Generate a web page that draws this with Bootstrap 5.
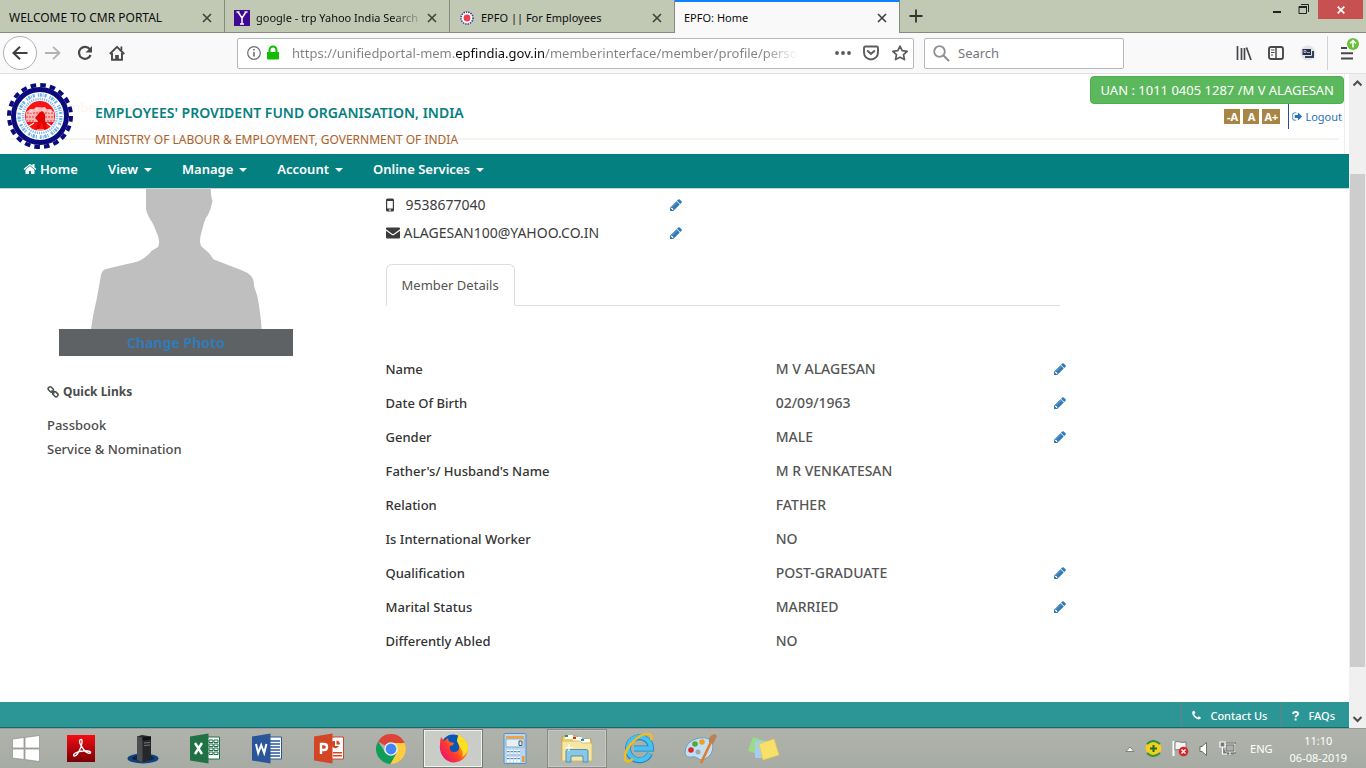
<!DOCTYPE html>
<html lang="en">
<head>
<meta charset="utf-8">
<meta name="viewport" content="width=device-width, initial-scale=1">
<title>EPFO: Home</title>
<link href="https://cdn.jsdelivr.net/npm/bootstrap@5.3.0/dist/css/bootstrap.min.css" rel="stylesheet">
<style>
  body { font-family: "Noto Sans", "Open Sans", sans-serif; font-size: 13px; line-height: 20px; color: #3c3c3c; background: #fff; }
  button { font: inherit; color: inherit; }
  .plain-btn { border: 0; background: none; padding: 0; display: inline-flex; align-items: center; justify-content: center; }
  svg { display: block; flex: none; }

  /* browser tab strip */
  .tabstrip { height: 33px; background: #c1c9b5; border-bottom: 1px solid #858b7c; color: #0c0c0d; }
  .tab-item { width: 225px; height: 33px; flex: 0 1 225px; padding: 2px 10px 0 9px; border-right: 1px solid #858b7c; font-size: 11px; }
  .tab-item .tab-title { flex: 1 1 0; min-width: 0; overflow: hidden; white-space: nowrap; }
  .tab-item.caps { font-size: 12px; }
  .tab-icon { margin-right: 6px; }
  .tab-item.fade-end .tab-title { -webkit-mask-image: linear-gradient(90deg, #000 80%, transparent); mask-image: linear-gradient(90deg, #000 80%, transparent); }
  .tab-item.current { background: #f9f9fa; border-top: 2px solid #0a84ff; padding-top: 0; }
  .close-win { width: 45px; height: 19px; background: #c75050; margin-right: 3px; }

  /* browser toolbar */
  .toolbar { height: 41px; background: #f9f9fa; border-bottom: 1px solid #e1e1e2; color: #48484a; padding-left: 3px; }
  .back-btn { width: 34px; height: 34px; border: 1px solid #b1b1b1; border-radius: 50%; background: #fff; }
  .fieldbox { height: 31px; background: #fff; border: 1px solid #b8b8b8; border-radius: 2px; }
  .fieldbox input { border: 0; outline: 0; padding: 0; background: transparent; min-width: 0; height: 27px; color: #76767a; font-size: 13px; }
  .fieldbox input.url-input {
    color: #76767a; -webkit-text-fill-color: transparent;
    background: linear-gradient(90deg, #808080 167px, #0c0c0d 167px, #0c0c0d 256px, #808080 256px, #808080 475px, #fff 510px);
    -webkit-background-clip: text; background-clip: text;
  }
  .url-box { margin-left: 112px; }
  .search-box { width: 200px; margin-left: 10px; }
  .gap-before { margin-left: 12px; }
  .gap-wide { margin-left: 112px; }
  .tool-sep { width: 1px; height: 34px; background: #d2d2d3; margin-left: 11px; }

  /* site header */
  .site-head { height: 80px; border-right: 1px solid #eee; margin-right: 4px; padding-left: 7px; }
  .site-head::before { content: ""; position: absolute; left: 10px; right: 5px; top: 64px; height: 2px; background: #f6f2ec; }
  .ghost-title { position: absolute; left: 49px; top: 23px; color: #faf6ef; }
  .seal { margin-top: 9px; }
  .org-text { padding: 29px 0 0 22px; }
  .org-name { color: #058080; font-size: 14px; font-weight: 600; line-height: 20px; margin: 0; }
  .org-ministry { color: #a9622c; font-size: 12px; line-height: 20px; margin: 7px 0 0; }
  .user-box { padding-top: 2px; }
  .uan-badge { background: #5cb85c; border: 1px solid #4cae4c; border-radius: 4px; color: #fff; padding: 3px 9px; font-size: 13px; }
  .size-btn { height: 15px; min-width: 16px; padding: 0 2px; margin-left: 3px; border: 0; background: #a98545; color: #fff; font-size: 11px; line-height: 15px; font-weight: 700; }
  .logout { font-size: 11px; color: #2a72b8; border-left: 1px solid #2a4aa5; height: 25px; padding-left: 3px; margin: 0 2px 0 8px; gap: 2px; }

  /* main menu */
  .menu-bar { background: #058080; height: 35px; border-bottom: 1px solid #c8d6d6; padding: 0 8px; }
  .menu-bar .nav-link { color: #fff; font-size: 13px; font-weight: 600; line-height: 20px; padding: 5px 15px; }
  .menu-bar .home-link { gap: 3px; }
  .menu-bar .dropdown-toggle::after { margin-left: 6px; vertical-align: 2px; border-top-width: 4px; border-right-width: 4px; border-left-width: 4px; }

  /* profile */
  .profile-grid { display: grid; grid-template-columns: 26fr 74fr; padding-left: 47px; }
  .photo { width: 234px; margin-left: 12px; }
  .photo-link { display: block; background: #5e6264; color: #337ab7; font-size: 14px; font-weight: 700; line-height: 27px; text-align: center; text-decoration: none; }
  .side-title { font-size: 12px; font-weight: 700; color: #4b4b4b; line-height: 20px; margin: 26px 0 11px; }
  .side-link { color: #4b4b4b; font-weight: 500; line-height: 24px; text-decoration: none; }
  .contact-list { padding-top: 2px; }
  .contact-line { display: grid; grid-template-columns: 284fr 680fr; height: 28px; align-items: center; font-size: 14px; }
  .edit-link { color: #337ab7; display: block; width: 14px; }
  .tab-head { width: 70%; margin-top: 17px; border-color: #ddd; }
  .tab-head .nav-link.active { color: #555; border-color: #ddd #ddd #fff; padding: 10px 15px; line-height: 20px; font-weight: 400; }
  .details { width: 100%; margin-top: 46px; table-layout: fixed; }
  .details th, .details td { height: 34px; padding: 0; vertical-align: middle; }
  .details th { font-weight: 500; color: #333; width: 40.5%; }
  .details td { font-weight: 500; font-size: 14px; color: #555; }
  .details td:nth-child(2) { width: 28.8%; }

  .site-foot { height: 26px; background: #2c9595; border-bottom: 1px solid #136a6a; }
  .site-foot a { color: #fff; font-size: 11px; font-weight: 500; text-decoration: none; border-left: 1px solid #6d7f80; padding: 2px 14px 0 9px; gap: 8px; }

  .content-row { min-height: 0; }
  .scroll-track { width: 17px; background: #f0f0f0; }
  .scroll-before { flex: 81 0 0; }
  .scroll-thumb { flex: 493 0 0; background: #cdcdcd; margin: 0 1px; }
  .scroll-after { flex: 42 0 0; }

  /* desktop taskbar */
  .taskbar { height: 40px; background: linear-gradient(#b0b3ab, #a6aba4); border-top: 1px solid #979a94; color: #fff; font-size: 11px; }
  .task { width: 60px; height: 39px; margin-right: 2px; border: 1px solid transparent; }
  .task.start { width: 51px; margin-right: 0; }
  .task.open { border-color: #888b85; background: #b5b9b2; box-shadow: inset 0 0 0 1px #c5c8c2; }
  .task.active { border-color: #777a75; background: #c9ccc7; box-shadow: inset 0 0 0 1px #f2f3f1; }
  .tray { gap: 10px; }
  .clock { line-height: 17px; text-align: center; margin: 0 19px 0 7px; }
</style>
</head>
<body class="d-flex flex-column vh-100 overflow-hidden">

<svg width="0" height="0" class="position-absolute" aria-hidden="true">
  <symbol id="i-pencil" viewBox="0 0 1792 1792"><path fill="currentColor" d="M491 1536l91-91-235-235-91 91v107h128v128h107zm523-928q0-22-22-22-10 0-17 7l-542 542q-7 7-7 17 0 22 22 22 10 0 17-7l542-542q7-7 7-17zm-54-192l416 416-832 832h-416v-416zm683 96q0 53-37 90l-166 166-416-416 166-165q36-38 90-38 53 0 91 38l235 234q37 39 37 91z"/><path fill="currentColor" fill-opacity=".6" d="M960 560l90 90-600 600-90-90z"/></symbol>
  <symbol id="i-close" viewBox="0 0 10 10"><path d="M1 1l8 8M9 1l-8 8" stroke="#3e413b" stroke-width="1.6" fill="none"/></symbol>
  <symbol id="i-seal" viewBox="0 0 66 66">
    <circle cx="33" cy="33" r="31" fill="none" stroke="#0b0b7c" stroke-width="4" stroke-dasharray="5.600 4.139"/>
    <circle cx="33" cy="33" r="26.500" fill="#fff" stroke="#0b0b7c" stroke-width="5"/>
    <circle cx="33" cy="33" r="21" fill="none" stroke="#6fb1f0" stroke-width="3.400" stroke-dasharray="1.200 .9 2.200 .8 .8 1.100 2 3"/>
    <circle cx="33" cy="33" r="17" fill="none" stroke="#7dbcf3" stroke-width="2.400" stroke-dasharray="1.200 1"/>
    <circle cx="33" cy="33" r="15" fill="#f81414"/>
    <path d="M19 29q3-3 7-3l7-2 7 2q4 0 7 3v10h-28z" fill="#f9b4b4"/>
    <path d="M20 30h26M19 34h9M38 34h9M19 38h8M40 38h8" stroke="#e33" stroke-width="1.200" stroke-dasharray="2 1"/>
    <circle cx="24" cy="28" r="2" fill="#fcc"/><circle cx="30" cy="26" r="2" fill="#fcc"/><circle cx="37" cy="26" r="2" fill="#fcc"/><circle cx="43" cy="28" r="2" fill="#fcc"/>
    <path d="M32 30l3-2 3 3v6l2 9h-3l-2-6-3 6h-3l2-8-3-3z" fill="#e60000"/>
    <path d="M22 43l5-3M44 43l-4-3M30 47h7" stroke="#fff" stroke-width="1.200"/>
  </symbol>
</svg>

<!-- Tab strip -->
<div class="tabstrip d-flex flex-shrink-0">
  <div class="tab-item caps d-flex align-items-center"><span class="tab-title">WELCOME TO CMR PORTAL</span><button class="plain-btn" aria-label="Close tab"><svg width="14" height="14" viewBox="-2 -2 14 14"><use href="#i-close" width="10" height="10"/></svg></button></div>
  <div class="tab-item fade-end d-flex align-items-center">
    <svg class="tab-icon" width="16" height="16" viewBox="0 0 16 16"><path fill="#3e0a91" d="M0 0h16v16H0z"/><path d="M4 2l4 6 4-6M8 8v6M2.500 2h3M10.500 2h3M6 14h4" stroke="#fff" stroke-width="1.500" fill="none"/></svg>
    <span class="tab-title">google - trp Yahoo India Search</span><button class="plain-btn" aria-label="Close tab"><svg width="14" height="14" viewBox="-2 -2 14 14"><use href="#i-close" width="10" height="10"/></svg></button></div>
  <div class="tab-item d-flex align-items-center">
    <svg class="tab-icon" width="16" height="16" viewBox="0 0 16 16"><circle cx="8" cy="8" r="6" fill="#fff" stroke="#3d3d94" stroke-width="1.600" stroke-dasharray="1.400 1"/><circle cx="8" cy="8" r="3.400" fill="#ee3f48"/></svg>
    <span class="tab-title">EPFO || For Employees</span><button class="plain-btn" aria-label="Close tab"><svg width="14" height="14" viewBox="-2 -2 14 14"><use href="#i-close" width="10" height="10"/></svg></button></div>
  <div class="tab-item current d-flex align-items-center"><span class="tab-title">EPFO: Home</span><button class="plain-btn" aria-label="Close tab"><svg width="14" height="14" viewBox="-2 -2 14 14"><use href="#i-close" width="10" height="10"/></svg></button></div>
  <button class="plain-btn ms-2" aria-label="New tab"><svg width="16" height="16" viewBox="0 0 16 16"><path d="M8 1.500v13M1.500 8h13" stroke="#32352f" stroke-width="1.800"/></svg></button>
  <div class="ms-auto d-flex align-items-start">
    <button class="plain-btn me-3" aria-label="Minimize"><svg width="10" height="19" viewBox="0 0 10 19"><path d="M1 12h8" stroke="#222" stroke-width="2"/></svg></button>
    <button class="plain-btn me-2" aria-label="Restore"><svg width="12" height="19" viewBox="0 0 12 19"><path d="M1 6.500h7.500v7H1zM3 4.500h7.500V12" stroke="#222" fill="none"/><path d="M1 7h8" stroke="#222" stroke-width="2"/></svg></button>
    <button class="plain-btn close-win" aria-label="Close"><svg width="8" height="8" viewBox="0 0 8 8"><path d="M.7.7l6.600 6.600M7.300.7L.7 7.300" stroke="#fff" stroke-width="1.700"/></svg></button>
  </div>
</div>

<!-- Toolbar -->
<div class="toolbar d-flex align-items-center flex-shrink-0">
  <button class="plain-btn back-btn" aria-label="Back"><svg width="16" height="16" viewBox="0 0 16 16"><path d="M15.500 8H1.500M8 1.800L1.500 8 8 14.200" fill="none" stroke="#3f3f41" stroke-width="2"/></svg></button>
  <button class="plain-btn ms-2" aria-label="Forward"><svg width="16" height="16" viewBox="0 0 16 16"><path d="M0 8h14.500M8 1.800L14.500 8 8 14.200" fill="none" stroke="#b3b3b4" stroke-width="1.800"/></svg></button>
  <button class="plain-btn ms-3" aria-label="Reload"><svg width="16" height="16" viewBox="0 0 16 16"><path d="M12.800 4.200A6 6 0 1 0 13.600 10" fill="none" stroke="#48484a" stroke-width="2.200"/><path d="M15 1v6.500H8.500z" fill="#48484a"/></svg></button>
  <button class="plain-btn ms-3" aria-label="Home page"><svg width="16" height="16" viewBox="0 0 16 16"><path d="M.8 9L8 1.800 15.200 9" fill="none" stroke="#48484a" stroke-width="1.900" stroke-linejoin="round"/><path d="M3 8v6.800h10V8" fill="none" stroke="#48484a" stroke-width="1.900"/><path d="M6.200 15v-5h3.600v5zM11.500 1.500h1.800v4h-1.800z" fill="#48484a"/></svg></button>
  <div class="fieldbox url-box d-flex align-items-center flex-grow-1">
    <svg class="ms-2" width="16" height="16" viewBox="0 0 16 16"><circle cx="8" cy="8" r="6.300" fill="none" stroke="#6d6d70" stroke-width="1.200"/><path d="M8 7v4.500M8 4v1.600" stroke="#6d6d70" stroke-width="1.600"/></svg>
    <svg class="ms-1" width="14" height="16" viewBox="0 0 14 16"><path d="M1 7h12v6.500q0 1-1 1H2q-1 0-1-1z" fill="#12bc00"/><path d="M3.500 8V5a3.500 3.500 0 0 1 7 0v3" fill="none" stroke="#12bc00" stroke-width="2"/></svg>
    <input class="url-input flex-grow-1 ms-2 ps-1" type="text" aria-label="Address" value="https://unifiedportal-mem.epfindia.gov.in/memberinterface/member/profile/personal">
    <button class="plain-btn ms-4" aria-label="Page actions"><svg width="16" height="16" viewBox="0 0 16 16"><g fill="#59595b"><circle cx="2" cy="8" r="1.900"/><circle cx="8" cy="8" r="1.900"/><circle cx="14" cy="8" r="1.900"/></g></svg></button>
    <button class="plain-btn gap-before" aria-label="Save to Pocket"><svg width="16" height="16" viewBox="0 0 16 16"><path d="M2.500 1.500h11q1.500 0 1.500 1.500v4.500a7 7 0 0 1-14 0V3q0-1.500 1.500-1.500z" fill="none" stroke="#5c5c5e" stroke-width="1.900"/><path d="M4.800 6L8 9l3.200-3" fill="none" stroke="#5c5c5e" stroke-width="2" stroke-linecap="round"/></svg></button>
    <button class="plain-btn gap-before me-1" aria-label="Bookmark"><svg width="18" height="16" viewBox="0 0 18 16"><path d="M9 1.200l2.200 4.500 5 .6-3.700 3.400 1 4.900L9 12.200l-4.500 2.400 1-4.900L1.800 6.300l5-.6z" fill="none" stroke="#5c5c5e" stroke-width="1.700" stroke-linejoin="round"/></svg></button>
  </div>
  <div class="fieldbox search-box d-flex align-items-center px-2">
    <svg width="17" height="17" viewBox="0 0 17 17"><circle cx="6.500" cy="6.500" r="5.300" fill="none" stroke="#8e8e90" stroke-width="1.800"/><path d="M10.500 10.500l5.500 5.500" stroke="#8e8e90" stroke-width="2"/></svg>
    <input class="ms-1 ps-1 flex-grow-1" type="text" value="Search" aria-label="Search the web">
  </div>
  <button class="plain-btn gap-wide" aria-label="Library"><svg width="16" height="16" viewBox="0 0 16 16"><path d="M1.500 1v14M5.500 3v12M8.500 3v12M10.500 2.500l4.500 12.500" stroke="#48484a" stroke-width="1.700"/></svg></button>
  <button class="plain-btn ms-3" aria-label="Sidebars"><svg width="16" height="16" viewBox="0 0 16 16"><rect x="1" y="2" width="14" height="12" rx="2" fill="none" stroke="#48484a" stroke-width="1.900"/><path d="M8 2v12" stroke="#48484a" stroke-width="1.500"/><path d="M3 5h3.500M3 7.500h3.500M3 10h2" stroke="#48484a"/></svg></button>
  <button class="plain-btn ms-3" aria-label="Extension"><svg width="16" height="16" viewBox="0 0 16 16"><circle cx="8" cy="8" r="7.500" fill="#e3e3e5"/><path d="M5 6h9v7H5z" fill="#34425b"/><path d="M2 3.500h9.500v7H2z" fill="#22304c" stroke="#e3e3e5"/><path d="M4 5.500h2v2H4zM7 7.500h3" stroke="#cdd3dd" stroke-width=".8" fill="none"/></svg></button>
  <span class="tool-sep"></span>
  <button class="plain-btn ms-2 me-1" aria-label="Open menu"><svg width="26" height="34" viewBox="0 0 26 34"><path d="M5 12h6M5 17.200h12M5 22.500h12" stroke="#48484a" stroke-width="2"/><circle cx="17" cy="8" r="6" fill="#6cbf3c"/><path d="M17 11.500V5M14 7.500l3-3 3 3" fill="none" stroke="#fff" stroke-width="1.500"/></svg></button>
</div>

<div class="content-row d-flex flex-grow-1">
  <div class="d-flex flex-column flex-grow-1 overflow-hidden">

    <header class="site-head position-relative d-flex align-items-start flex-shrink-0">
      <span class="ghost-title" aria-hidden="true">Member Details</span>
      <svg class="seal position-relative" width="66" height="66" role="img" aria-label="EPFO seal"><use href="#i-seal"/></svg>
      <div class="org-text position-relative">
        <h1 class="org-name">EMPLOYEES' PROVIDENT FUND ORGANISATION, INDIA</h1>
        <p class="org-ministry">MINISTRY OF LABOUR &amp; EMPLOYMENT, GOVERNMENT OF INDIA</p>
      </div>
      <div class="user-box ms-auto d-flex flex-column align-items-end">
        <span class="uan-badge">UAN : 1011 0405 1287 /M V ALAGESAN</span>
        <div class="d-flex align-items-center">
          <button class="size-btn">-A</button>
          <button class="size-btn">A</button>
          <button class="size-btn">A+</button>
          <a href="#" class="logout d-flex align-items-center text-decoration-none"><svg width="11" height="11" viewBox="0 0 1792 1792"><path fill="currentColor" d="M704 1440q0 4 1 20t.5 26.500-3 23.500-10 19.500-20.500 6.500h-320q-119 0-203.500-84.500t-84.500-203.500v-704q0-119 84.500-203.500t203.500-84.500h320q13 0 22.500 9.500t9.500 22.500q0 4 1 20t.5 26.500-3 23.500-10 19.500-20.500 6.500h-320q-66 0-113 47t-47 113v704q0 66 47 113t113 47h312l11.500 1 11.500 3 8 5.500 7 9 2 13.500zm928-544q0 26-19 45l-544 544q-19 19-45 19t-45-19-19-45v-288h-448q-26 0-45-19t-19-45v-384q0-26 19-45t45-19h448v-288q0-26 19-45t45-19 45 19l544 544q19 19 19 45z"/></svg>Logout</a>
        </div>
      </div>
    </header>

    <nav class="menu-bar nav flex-shrink-0 align-items-start">
      <a class="nav-link home-link d-flex align-items-center" href="#"><svg width="14" height="14" viewBox="0 0 1792 1792"><path fill="currentColor" d="M1472 992v480q0 26-19 45t-45 19h-384v-384h-256v384h-384q-26 0-45-19t-19-45v-480q0-1 .5-3t.5-3l575-474 575 474q1 2 1 6zm223-69l-62 74q-8 9-21 11h-3q-13 0-21-7l-692-577-692 577q-12 8-24 7-13-2-21-11l-62-74q-8-10-7-23.500t11-21.500l719-599q32-26 76-26t76 26l244 204v-195q0-14 9-23t23-9h192q14 0 23 9t9 23v408l219 182q10 8 11 21.500t-7 23.500z"/></svg>Home</a>
      <a class="nav-link dropdown-toggle" href="#">View</a>
      <a class="nav-link dropdown-toggle" href="#">Manage</a>
      <a class="nav-link dropdown-toggle" href="#">Account</a>
      <a class="nav-link dropdown-toggle" href="#">Online Services</a>
    </nav>

    <main class="profile-grid flex-grow-1 overflow-hidden align-content-start">
      <aside>
        <div class="photo">
          <svg class="w-100" viewBox="0 0 234 140" role="img" aria-label="Profile photo"><path fill="#bfbfbf" d="M87 0V20Q88 26 93 33L95 37Q97 42 99 47Q101 54 99 58L92.700 61.700Q88 68 80 72Q74 74 68 75L47 80Q43 81 42 86L37.700 110Q34 125 32 140H202.700Q201 120 198.300 107L195 97Q195 90 192 87Q188 83 182 81L154.300 70.300Q150 63 147 61.500L142 57Q140 52 142 45L145 33.700Q146 29 149 26Q152 20 153.500 12Q152 8 151.700 0z"/></svg>
          <a href="#" class="photo-link">Change Photo</a>
        </div>
        <h2 class="side-title d-flex align-items-center"><svg class="me-1" width="12" height="12" viewBox="0 0 12 12"><g fill="none" stroke="currentColor" stroke-width="1.500"><rect x="1" y="1.500" width="5.500" height="3.800" rx="1.700" transform="rotate(45 3.750 3.400)"/><rect x="5.700" y="6.300" width="5.500" height="3.800" rx="1.700" transform="rotate(45 8.400 8.200)"/><path d="M4.500 4.500l3 3"/></g></svg>Quick Links</h2>
        <ul class="list-unstyled mb-0">
          <li><a class="side-link d-block" href="#">Passbook</a></li>
          <li><a class="side-link d-block" href="#">Service &amp; Nomination</a></li>
        </ul>
      </aside>

      <section>
        <div class="contact-list">
          <div class="contact-line">
            <span class="d-flex align-items-center"><svg width="20" height="14" viewBox="0 0 20 14"><path fill="#3c3c3c" fill-rule="evenodd" d="M1.500.5h5q1.500 0 1.500 1.500v10q0 1.500-1.500 1.500h-5Q0 13.500 0 12V2Q0 .5 1.500.5zM1.200 3v7.500h5.600V3zM4 11.200a.8.8 0 1 0 .01 0z"/></svg>9538677040</span>
            <a href="#" class="edit-link" aria-label="Edit mobile number"><svg width="14" height="14"><use href="#i-pencil"/></svg></a>
          </div>
          <div class="contact-line">
            <span class="d-flex align-items-center"><svg class="me-1" width="14" height="12" viewBox="0 0 14 12"><path fill="#3c3c3c" d="M0 1.500Q0 .5 1 .5h12q1 0 1 1v.7L7.500 7h-1L0 2.200zM0 3.800l6.300 4.400h1.400L14 3.800v6.700q0 1-1 1H1q-1 0-1-1z"/></svg>ALAGESAN100@YAHOO.CO.IN</span>
            <a href="#" class="edit-link" aria-label="Edit e-mail"><svg width="14" height="14"><use href="#i-pencil"/></svg></a>
          </div>
        </div>

        <ul class="nav nav-tabs tab-head">
          <li class="nav-item"><a class="nav-link active" aria-current="page" href="#">Member Details</a></li>
        </ul>

        <table class="details">
          <tbody>
            <tr><th scope="row">Name</th><td>M V ALAGESAN</td><td><a href="#" class="edit-link" aria-label="Edit name"><svg width="14" height="14"><use href="#i-pencil"/></svg></a></td></tr>
            <tr><th scope="row">Date Of Birth</th><td>02/09/1963</td><td><a href="#" class="edit-link" aria-label="Edit date of birth"><svg width="14" height="14"><use href="#i-pencil"/></svg></a></td></tr>
            <tr><th scope="row">Gender</th><td>MALE</td><td><a href="#" class="edit-link" aria-label="Edit gender"><svg width="14" height="14"><use href="#i-pencil"/></svg></a></td></tr>
            <tr><th scope="row">Father's/ Husband's Name</th><td>M R VENKATESAN</td><td></td></tr>
            <tr><th scope="row">Relation</th><td>FATHER</td><td></td></tr>
            <tr><th scope="row">Is International Worker</th><td>NO</td><td></td></tr>
            <tr><th scope="row">Qualification</th><td>POST-GRADUATE</td><td><a href="#" class="edit-link" aria-label="Edit qualification"><svg width="14" height="14"><use href="#i-pencil"/></svg></a></td></tr>
            <tr><th scope="row">Marital Status</th><td>MARRIED</td><td><a href="#" class="edit-link" aria-label="Edit marital status"><svg width="14" height="14"><use href="#i-pencil"/></svg></a></td></tr>
            <tr><th scope="row">Differently Abled</th><td>NO</td><td></td></tr>
          </tbody>
        </table>
      </section>
    </main>

    <footer class="site-foot d-flex justify-content-end flex-shrink-0">
      <a href="#" class="d-flex align-items-center"><svg width="11" height="11" viewBox="0 0 1792 1792"><path fill="currentColor" d="M1600 1240q0 27-10 70.500t-21 68.500q-21 50-122 106-94 51-186 51-27 0-52.500-3.500t-57.500-12.500-47.500-14.500-55.500-20.500-49-18q-98-35-175-83-128-79-264.500-215.500t-215.500-264.500q-48-77-83-175-3-9-18-49t-20.500-55.500-14.500-47.500-12.500-57.500-3.500-52.500q0-92 51-186 56-101 106-122 25-11 68.500-21t70.500-10q14 0 21 3 18 6 53 76 11 19 30 54t35 63.500 31 53.500q3 4 17.500 25t21.500 35.500 7 28.500q0 20-28.500 50t-62 55-62 53-28.500 46q0 9 5 22.500t8.500 20.500 14 24 11.500 19q76 137 174 235t235 174q2 1 19 11.500t24 14 20.500 8.500 22.500 5q18 0 46-28.500t53-62 55-62 50-28.500q14 0 28.500 7t35.500 21.500 25 17.500q25 15 53.500 31t63.500 35 54 30q70 35 76 53 3 7 3 21z"/></svg>Contact Us</a>
      <a href="#" class="d-flex align-items-center"><svg width="9" height="10" viewBox="0 0 9 10"><path d="M2 3.200Q2.300 1 4.600 1T7 2.900Q7 4 5.600 4.600 4.600 5 4.600 6.300M4.600 7.600v2" fill="none" stroke="#fff" stroke-width="1.900"/></svg>FAQs</a>
    </footer>
  </div>

  <div class="scroll-track d-flex flex-column flex-shrink-0" aria-hidden="true">
    <svg class="mx-auto" width="17" height="19" viewBox="0 0 17 19"><path d="M4.500 11.500l4-4 4 4" fill="none" stroke="#4c4c4c" stroke-width="2"/></svg>
    <div class="scroll-before"></div>
    <div class="scroll-thumb"></div>
    <div class="scroll-after"></div>
    <svg class="mx-auto" width="17" height="19" viewBox="0 0 17 19"><path d="M4.500 8l4 4 4-4" fill="none" stroke="#4c4c4c" stroke-width="2"/></svg>
  </div>
</div>

<!-- Taskbar -->
<div class="taskbar d-flex align-items-start flex-shrink-0">
  <button class="plain-btn task start" aria-label="Start"><svg width="28" height="27" viewBox="0 0 28 27"><path d="M.5 4L12 2.500V13H.5zM13 2.400L27.500.5V13H13zM.5 14H12v10.500L.5 23zM13 14h14.500v12.500L13 24.600z" fill="#fff" stroke="#8c8f89" stroke-width=".7"/></svg></button>
  <button class="plain-btn task" aria-label="Adobe Reader"><svg width="30" height="30" viewBox="0 0 30 30"><defs><linearGradient id="ar" x2="0" y2="1"><stop stop-color="#f40b12"/><stop offset="1" stop-color="#780005"/></linearGradient></defs><path d="M1 1h28v27H1z" fill="url(#ar)"/><path d="M14 6c2-2 3 1 1 7-2 5-5 10-7 9-2-2 4-5 9-5 5-1 9 1 7 2-2 1-6-2-8-6-2-3-3-6-2-7z" fill="none" stroke="#fff" stroke-width="1.400"/></svg></button>
  <button class="plain-btn task" aria-label="Server"><svg width="34" height="30" viewBox="0 0 34 30"><ellipse cx="17" cy="24.500" rx="15.500" ry="5" fill="#10427d"/><ellipse cx="17" cy="24" rx="11" ry="3" fill="#0a2348"/><path d="M11 2.500l5-1.500 9 1.500V25l-8 3.500-6-2z" fill="#26272a"/><path d="M11 2.500l5.500 1v25L11 26z" fill="#4b4d51"/><path d="M16.500 3.500l8.500-1v3l-8.500 1z" fill="#111"/><path d="M18 9l6-.5M18 11.500l6-.5" stroke="#77797d"/></svg></button>
  <button class="plain-btn task" aria-label="Excel"><svg width="31" height="31" viewBox="0 0 31 31"><path d="M17 4h12.500v22H17z" fill="#fff" stroke="#1f7244"/><path d="M19 7h4v2.500h-4zM24 7h4v2.500h-4zM19 11h4v2.500h-4zM24 11h4v2.500h-4zM19 15h4v2.500h-4zM24 15h4v2.500h-4zM19 19h4v2.500h-4zM24 19h4v2.500h-4z" fill="#fff" stroke="#1f7244"/><path d="M0 3.500L18.500.5v30L0 27.500z" fill="#1f7244"/><path d="M5 10l7 11M12 10L5 21" stroke="#fff" stroke-width="2.400"/></svg></button>
  <button class="plain-btn task" aria-label="Word"><svg width="31" height="31" viewBox="0 0 31 31"><path d="M17 4h12.500v22H17z" fill="#fff" stroke="#2a5699"/><path d="M18 8h10M18 11h10M18 14h10M18 17h10M18 20h10M18 23h10" stroke="#2a5699" stroke-width="1.300"/><path d="M0 3.500L18.500.5v30L0 27.500z" fill="#2a5699"/><path d="M4 11l2.200 9L9.200 12l3 8 2.200-9" stroke="#fff" stroke-width="2" fill="none"/></svg></button>
  <button class="plain-btn task" aria-label="PowerPoint"><svg width="31" height="31" viewBox="0 0 31 31"><path d="M17 4h12.500v22H17z" fill="#fff" stroke="#d24625"/><path d="M19 8a4 4 0 1 0 6 5h-4V8zM22.500 7.500a4 4 0 0 1 3.500 4h-3.500zM19 19h9v1.500h-9zM19 22h9v1.500h-9z" fill="#d24625"/><path d="M0 3.500L18.500.5v30L0 27.500z" fill="#d24625"/><path d="M7 21V11h3q3 0 3 3t-3 3H7" stroke="#fff" stroke-width="2.400" fill="none"/></svg></button>
  <button class="plain-btn task" aria-label="Chrome"><svg width="30" height="30" viewBox="0 0 30 30"><path d="M15 15L2 7.500A15 15 0 0 1 28 7.500L28.500 9H15z" fill="#db4437"/><path d="M2 7.500A15 15 0 0 0 14.500 30L21 18.500 15 15 9 18z" fill="#0f9d58"/><path d="M14.500 30A15 15 0 0 0 28.500 9H15l6 9.500z" fill="#ffcd40"/><circle cx="15" cy="15" r="6.800" fill="#f1f1f1"/><circle cx="15" cy="15" r="5.400" fill="#4285f4"/></svg></button>
  <button class="plain-btn task active" aria-label="Firefox"><svg width="31" height="31" viewBox="0 0 31 31"><defs><linearGradient id="fx" x1="0" x2="1" y1=".8" y2="0"><stop stop-color="#e3127c"/><stop offset=".35" stop-color="#ff3a2d"/><stop offset=".65" stop-color="#ff9a0a"/><stop offset="1" stop-color="#ffe626"/></linearGradient></defs><circle cx="15" cy="13" r="11.500" fill="#0a55b9"/><path d="M3 4l3 4 4-3q0 3 2 4l4 1q-1 3-4 3-1 6 4 6 6 0 5-6-1-4-2-5 1-6 2-7 2 3 4 4 4 3 5 8 1 10-8 15-9 4-16-3-5-6-4-13 0-5 1-8z" fill="url(#fx)"/><path d="M19 8q1-5 2-7 2 3 4 4 4 4 5 8 0 8-6 11 2-4-1-8z" fill="#ffdf22"/></svg></button>
  <button class="plain-btn task" aria-label="Calculator"><svg width="24" height="31" viewBox="0 0 24 31"><rect x="1" y=".5" width="22" height="30" rx="1" fill="#b8d6ef" stroke="#5a8fc4"/><path d="M3 3h18v2.500H3z" fill="#f6a23c"/><path d="M3 6h18v8H3z" fill="#e4f0f6" stroke="#6d98bf" stroke-width=".7"/><path d="M16 8h3v4.500h-3z" fill="none" stroke="#456"/><path d="M4 18h14M4 21.500h14M4 25h14M4 28h14" stroke="#fff" stroke-width="2.400" stroke-dasharray="2.500 1"/><path d="M4 18.500h14M4 22h14M4 25.500h14" stroke="#5b8fbd" stroke-dasharray="2.500 1"/><path d="M19 23h2.500v6H19z" fill="#f09a2c"/></svg></button>
  <button class="plain-btn task open" aria-label="File Explorer"><svg width="34" height="31" viewBox="0 0 34 31"><path d="M2 5q0-2 2-2h13l2 3h12v21H2z" fill="#edd173" stroke="#c39f3c"/><path d="M5 2h8v4H5zM13 4h9v4h-9zM20 6h10v4H20z" fill="#fff"/><path d="M5 2h3v2H5z" fill="#2a9c3a"/><path d="M13 4h3v2h-3z" fill="#cd3322"/><path d="M21 6h3v2h-3z" fill="#268bd2"/><path d="M2 8h18l2 2h10v18H2z" fill="#f7e6a1" stroke="#d3b25b" stroke-width=".8"/><path d="M6 29V18q0-1.500 1.500-1.500h19Q28 16.500 28 18v11h-5v-6H11v6z" fill="#8ac6e6" stroke="#4b93b8"/><path d="M9 11v7M5.500 14.500h7" stroke="#fff" stroke-width="1.200"/></svg></button>
  <button class="plain-btn task" aria-label="Internet Explorer"><svg width="32" height="31" viewBox="0 0 32 31"><path d="M27 20.500A11.500 11.500 0 1 1 28 15.500H11" fill="none" stroke="#1a86c4" stroke-width="6"/><path d="M26.800 20.500A11.500 11.500 0 1 1 28 15.500H11" fill="none" stroke="#48c0f2" stroke-width="4.400"/><path d="M28 7q2-5-2-6-7-1-15 7-10 9-9 18 1 5 8 0" fill="none" stroke="#f3bd1c" stroke-width="2.400"/></svg></button>
  <button class="plain-btn task" aria-label="Paint"><svg width="34" height="31" viewBox="0 0 34 31"><path d="M15 5q13-2 14 8 0 9-8 13-5 2-8-1-2-2-5-1-6 1-7-4Q1 8 15 5z" fill="#c4dff1" stroke="#749dbc"/><circle cx="7" cy="17" r="2.800" fill="#d92b2b"/><circle cx="11" cy="11" r="2.800" fill="#50a83b"/><circle cx="18" cy="9" r="2.800" fill="#f0a020"/><circle cx="14" cy="19" r="2.500" fill="#9eaaaa"/><path d="M27 9L17 30" stroke="#e07d25" stroke-width="2.600"/><path d="M25 9l4 2 4-8-2-2-3 1q-4 3-3 7z" fill="#b98252"/></svg></button>
  <button class="plain-btn task" aria-label="Sticky Notes"><svg width="33" height="26" viewBox="0 0 33 26"><path d="M6 1l13 4-5 14-13-4z" fill="#9bdb85"/><path d="M8 5h14v17H8z" fill="#a6cdf0"/><path d="M12 8l15-5 5 16-16 5z" fill="#f8e06a" stroke="#e6c948" stroke-width=".7"/></svg></button>

  <div class="tray ms-auto d-flex align-items-center align-self-stretch">
    <svg width="10" height="6" viewBox="0 0 10 6"><path d="M1 5.500L5 1l4 4.500z" fill="#fff" stroke="#6c6f6a" stroke-width=".8"/></svg>
    <svg width="17" height="17" viewBox="0 0 17 17"><circle cx="8.500" cy="8.500" r="7.800" fill="#f5cf1d"/><path d="M2 4Q8-2 15 4M15 13q-7 6-13 0" fill="none" stroke="#36913f" stroke-width="2"/><path d="M8.500 5v7M5 8.500h7" stroke="#226c2c" stroke-width="2"/></svg>
    <svg width="17" height="17" viewBox="0 0 17 17"><path d="M1.500 1v15" stroke="#fff" stroke-width="2"/><path d="M3 2q3-1 5 0t6 0v8q-4 1-6 0t-5 0z" fill="#f5f5f5" stroke="#6b6b6b" stroke-width=".8"/><circle cx="11.500" cy="11.500" r="4.800" fill="#d8232a"/><path d="M9.500 9.500l4 4M13.500 9.500l-4 4" stroke="#fff" stroke-width="1.500"/></svg>
    <svg width="10" height="16" viewBox="0 0 10 16"><path d="M1 5.500h2L7.500 1.500v13L3 10.500H1z" fill="#fff" stroke="#5f625d" stroke-width=".9"/></svg>
    <svg width="17" height="15" viewBox="0 0 17 15"><path d="M6 3h10v8H6zM8 14h7M11 11v3" fill="none" stroke="#444" stroke-width="2.600"/><path d="M6 3h10v8H6zM8 14h7M11 11v3" fill="none" stroke="#fff" stroke-width="1.200"/><path d="M1 1h5v5H1zM3.500 6v7H8" fill="#777" stroke="#fff" stroke-width="1.200"/></svg>
    <span class="ms-1">ENG</span>
    <div class="clock">11:10<br>06-08-2019</div>
  </div>
</div>

<script src="https://cdn.jsdelivr.net/npm/bootstrap@5.3.0/dist/js/bootstrap.bundle.min.js"></script>
</body>
</html>
